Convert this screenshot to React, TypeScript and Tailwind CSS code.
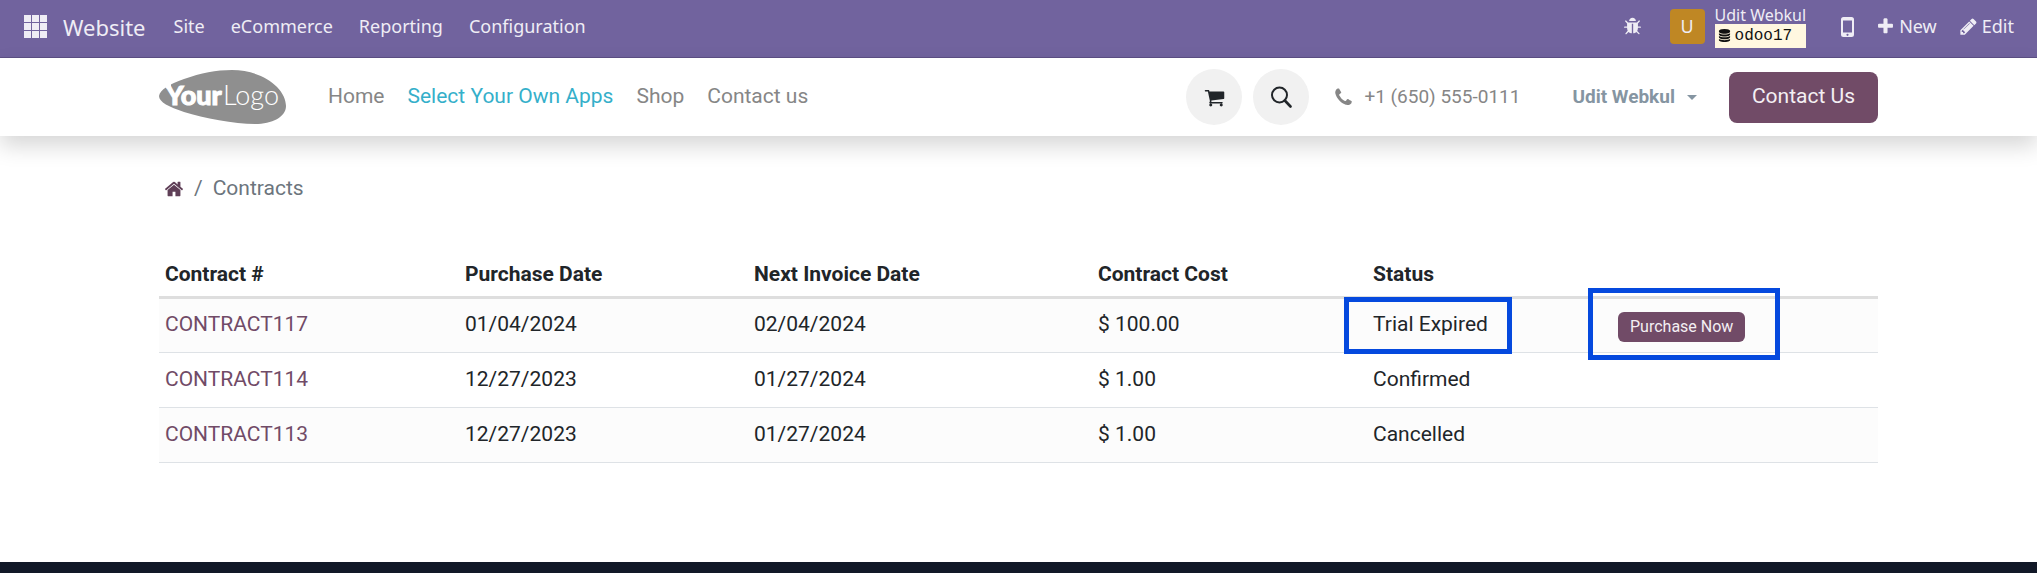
import React from "react";

const ICONS = {
  home: "M1472 992v480q0 26-19 45t-45 19h-384v-384h-256v384h-384q-26 0-45-19t-19-45v-480q0-1 .5-3t.5-3l575-474 575 474q1 2 1 6zm223-69l-62 74q-8 9-21 11h-3q-13 0-21-7l-692-577-692 577q-12 8-24 7-13-2-21-11l-62-74q-8-10-7-23.5t11-21.5l719-599q32-26 76-26t76 26l244 204v-195q0-14 9-23t23-9h192q14 0 23 9t9 23v408l219 182q10 8 11 21.5t-7 23.5z",
  cart: "M704 1536q0 52-38 90t-90 38-90-38-38-90 38-90 90-38 90 38 38 90zm896 0q0 52-38 90t-90 38-90-38-38-90 38-90 90-38 90 38 38 90zm128-1088v512q0 24-16.5 42.5t-40.5 21.5l-1044 122q13 60 13 70 0 16-24 64h920q26 0 45 19t19 45-19 45-45 19h-1024q-26 0-45-19t-19-45q0-11 8-31.5t16-36 21.5-40 15.5-29.5l-177-823h-204q-26 0-45-19t-19-45 19-45 45-19h256q16 0 28.5 6.5t19.5 15.5 13 24.5 8 26 5.5 29.5 4.5 26h1201q26 0 45 19t19 45z",
  phone: "M1600 1240q0 27-10 70.5t-21 68.5q-21 50-122 106-94 51-186 51-27 0-53-3.5t-57.5-12.5-47-14.5-55.5-20.5-49-18q-98-35-175-83-127-79-264-216t-216-264q-48-77-83-175-3-9-18-49t-20.5-55.5-14.5-47-12.5-57.5-3.5-53q0-92 51-186 56-101 106-122 25-11 68.5-21t70.5-10q14 0 21 3 18 6 53 76 11 19 30 54t35 63.5 31 53.5q3 4 17.5 25t21.5 35.5 7 28.5q0 20-28.5 50t-62 55-62 53-28.5 46q0 9 5 22.5t8.5 20.5 14 24 11.5 19q76 137 174 235t235 174q2 1 19 11.5t24 14 20.5 8.5 22.5 5q18 0 46-28.5t53-62 55-62 50-28.5q14 0 28.5 7t35.5 21.5 25 17.5q25 15 53.5 31t63.5 35 54 30q70 35 76 53 3 7 3 21z",
  pencil: "M491 1536l91-91-235-235-91 91v107h128v128h107zm523-928q0-22-22-22-10 0-17 7l-542 542q-7 7-7 17 0 22 22 22 10 0 17-7l542-542q7-7 7-17zm-54-192l416 416-832 832h-416v-416zm683 96q0 53-37 90l-166 166-416-416 166-165q36-38 90-38 53 0 91 38l235 234q37 39 37 91z",
  plus: "M1600 736v192q0 40-28 68t-68 28h-416v416q0 40-28 68t-68 28h-192q-40 0-68-28t-28-68v-416h-416q-40 0-68-28t-28-68v-192q0-40 28-68t68-28h416v-416q0-40 28-68t68-28h192q40 0 68 28t28 68v416h416q40 0 68 28t28 68z",
  database: "M896 768q237 0 443-43t325-127v170q0 69-103 128t-280 93.5-385 34.5-385-34.5-280-93.5-103-128v-170q119 84 325 127t443 43zm0 768q237 0 443-43t325-127v170q0 69-103 128t-280 93.5-385 34.5-385-34.5-280-93.5-103-128v-170q119 84 325 127t443 43zm0-384q237 0 443-43t325-127v170q0 69-103 128t-280 93.5-385 34.5-385-34.5-280-93.5-103-128v-170q119 84 325 127t443 43zm0-1152q208 0 385 34.5t280 93.5 103 128v128q0 69-103 128t-280 93.5-385 34.5-385-34.5-280-93.5-103-128v-128q0-69 103-128t280-93.5 385-34.5z",
  bug: "M1696 960q0 26-19 45t-45 19h-224q0 171-67 290l208 209q19 19 19 45t-19 45q-18 19-45 19t-45-19l-198-197q-5 5-15 13t-42 28.5-65 36.5-82 29-97 13v-896h-128v896q-51 0-101.5-13.5t-87-33-66-39-43.5-32.5l-15-14-183 207q-20 21-48 21-24 0-43-16-19-18-20.5-44.5t15.5-46.5l202-227q-58-114-58-274h-224q-26 0-45-19t-19-45 19-45 45-19h224v-294l-173-173q-19-19-19-45t19-45 45-19 45 19l173 173h844l173-173q19-19 45-19t45 19 19 45-19 45l-173 173v294h224q26 0 45 19t19 45zm-480-576h-640q0-133 93.5-226.5t226.5-93.5 226.5 93.5 93.5 226.5z",
};

function Icon({ name, className }: { name: keyof typeof ICONS; className: string }) {
  return (
    <svg viewBox="0 0 1792 1792" fill="currentColor" aria-hidden="true" className={className}>
      <path d={ICONS[name]} />
    </svg>
  );
}

function TopBar() {
  return (
    <header className="flex h-[58px] items-center justify-between border-b border-[#5d5085] bg-[#71639e] pr-[23px] pb-1 pl-6 font-['Noto_Sans',sans-serif] text-[18px] text-[#efedf5]">
      <nav className="flex items-center">
        <button aria-label="Home menu" className="mr-4">
          <svg viewBox="0 0 23 23" fill="currentColor" className="size-[23px]" aria-hidden="true">
            {[0, 8, 16].map((y) =>
              [0, 8, 16].map((x) => <rect key={`${x}-${y}`} x={x} y={y} width="7" height="7" />)
            )}
          </svg>
        </button>
        <a href="#website" className="mr-7 text-[22px] leading-8">Website</a>
        <div className="flex gap-[26px]">
          <a href="#site">Site</a>
          <a href="#ecommerce">eCommerce</a>
          <a href="#reporting">Reporting</a>
          <a href="#configuration">Configuration</a>
        </div>
      </nav>
      <div className="flex items-center">
        <button aria-label="Debug" className="mr-7">
          <Icon name="bug" className="size-[19px]" />
        </button>
        <button className="mr-[35px] flex items-center gap-[10px] text-left">
          <span className="flex size-[35px] items-center justify-center rounded-[4px] bg-[#bf8724] text-[18px]">U</span>
          <span className="flex flex-col">
            <span className="text-[16px] leading-[18px]">Udit Webkul</span>
            <span className="flex h-6 items-center gap-1 bg-[#fff7e0] px-[3px] font-['Liberation_Mono',monospace] text-[16px] text-[#111]">
              <Icon name="database" className="size-[13px]" />
              odoo17
            </span>
          </span>
        </button>
        <button aria-label="Mobile preview" className="mr-[22px]">
          <svg viewBox="0 0 13 20" className="h-5 w-[13px]" aria-hidden="true">
            <path
              fill="currentColor"
              fillRule="evenodd"
              d="M2.5 0H10.5A2.5 2.5 0 0 1 13 2.5V17.5A2.5 2.5 0 0 1 10.5 20H2.5A2.5 2.5 0 0 1 0 17.5V2.5A2.5 2.5 0 0 1 2.5 0ZM2 3.5V15.5H11V3.5ZM6.5 16.7A1.1 1.1 0 1 0 6.5 18.900A1.1 1.1 0 1 0 6.5 16.7Z"
            />
          </svg>
        </button>
        <button className="mr-[22px] flex items-center gap-1">
          <Icon name="plus" className="size-[19px]" />
          New
        </button>
        <button className="flex items-center gap-1">
          <Icon name="pencil" className="size-[19px]" />
          Edit
        </button>
      </div>
    </header>
  );
}

function Logo() {
  return (
    <svg viewBox="0 0 127 54" className="h-[54px] w-[127px]" role="img" aria-label="YourLogo">
      <path
        fill="#8f8f8f"
        d="M0 26C1 20 10 14 25 9C42 3 57 0 73 0C103 0 127 18 127 36C127 47 113 54 96 54C75 54 45 48 25 42C10 37 0 32 0 26Z"
      />
      <path fill="#fff" d="M4 14H12V19H8L6.500 17L5 17.500Z" />
      <g fill="#fff" fontSize="27">
        <text x="7" y="35" fontFamily="Lato, sans-serif" fontWeight="900" stroke="#fff" strokeWidth="1">Your</text>
        <text x="64" y="35" fontFamily="Lato, sans-serif" fontWeight="300">Logo</text>
      </g>
    </svg>
  );
}

function SiteHeader() {
  return (
    <div className="relative bg-white shadow-[0_10px_21px_rgba(0,0,0,0.16)]">
      <div className="mx-auto flex h-[78px] max-w-[1719px] items-center text-[21px] text-[#868686]">
        <a href="#logo" className="mr-[42px]"><Logo /></a>
        <nav className="flex gap-[23px]">
          <a href="#home">Home</a>
          <a href="#apps" className="text-[#35afca]">Select Your Own Apps</a>
          <a href="#shop">Shop</a>
          <a href="#contactus">Contact us</a>
        </nav>
        <div className="ml-auto flex items-center">
          <button aria-label="Cart" className="mr-[11px] flex size-14 items-center justify-center rounded-full bg-[#f1f1f1] text-[#212529]">
            <Icon name="cart" className="size-[21px]" />
          </button>
          <button aria-label="Search" className="mr-6 flex size-14 items-center justify-center rounded-full bg-[#f1f1f1] text-[#212529]">
            <svg viewBox="0 0 22 22" className="size-[22px]" fill="none" stroke="currentColor" aria-hidden="true">
              <circle cx="9.500" cy="9" r="7.500" strokeWidth="2" />
              <path d="M14.800 14.500L20.500 20.500" strokeWidth="2.600" strokeLinecap="round" />
            </svg>
          </button>
          <a href="tel:+16505550111" className="mr-[52px] flex items-center gap-[10px] text-[19px]">
            <Icon name="phone" className="size-[21px]" />
            +1 (650) 555-0111
          </a>
          <button className="mr-8 flex items-center gap-3 text-[19px] font-bold text-[#8595a2]">
            Udit Webkul
            <svg viewBox="0 0 10 5" className="h-[5px] w-[10px]" fill="currentColor" aria-hidden="true">
              <path d="M0 0H10L5 5Z" />
            </svg>
          </button>
          <a href="#contact" className="flex h-[51px] items-center rounded-[8px] bg-[#714b67] px-[23px] text-[#f4eff3]">Contact Us</a>
        </div>
      </div>
    </div>
  );
}

const ROWS = [
  { id: "CONTRACT117", bought: "01/04/2024", next: "02/04/2024", cost: "$ 100.00", status: "Trial Expired", trial: true },
  { id: "CONTRACT114", bought: "12/27/2023", next: "01/27/2024", cost: "$ 1.00", status: "Confirmed", trial: false },
  { id: "CONTRACT113", bought: "12/27/2023", next: "01/27/2024", cost: "$ 1.00", status: "Cancelled", trial: false },
];

function Contracts() {
  return (
    <table className="mt-11 w-full border-collapse text-left text-[21px] leading-8 text-[#212529]">
      <colgroup>
        <col className="w-[300px]" />
        <col className="w-[289px]" />
        <col className="w-[344px]" />
        <col className="w-[275px]" />
        <col className="w-[245px]" />
        <col />
      </colgroup>
      <thead>
        <tr className="h-[48px] border-b-3 border-[#dedede]">
          <th className="px-[6px] pt-1">Contract #</th>
          <th className="px-[6px] pt-1">Purchase Date</th>
          <th className="px-[6px] pt-1">Next Invoice Date</th>
          <th className="px-[6px] pt-1">Contract Cost</th>
          <th className="px-[6px] pt-1">Status</th>
          <td />
        </tr>
      </thead>
      <tbody>
        {ROWS.map((r) => (
          <tr key={r.id} className="h-[55px] border-b border-[#dee2e6] odd:bg-[#fcfcfc]">
            <td className="px-[6px] pb-[2px]"><a href="#contract" className="text-[#714b67]">{r.id}</a></td>
            <td className="px-[6px] pb-[2px]">{r.bought}</td>
            <td className="px-[6px] pb-[2px]">{r.next}</td>
            <td className="px-[6px] pb-[2px]">{r.cost}</td>
            <td className="relative px-[6px] pb-[2px]">
              {r.status}
              {r.trial && <span className="pointer-events-none absolute -top-[2px] -left-[23px] h-[57px] w-[168px] border-5 border-[#0549de]" />}
            </td>
            <td className="relative px-[6px]">
              {r.trial && (
                <>
                  <button className="mt-1 flex h-[30px] items-center rounded-[6px] bg-[#714b67] px-3 text-[16px] text-[#f4eff3]">Purchase Now</button>
                  <span className="pointer-events-none absolute -top-[11px] -left-[24px] h-[72px] w-[192px] border-5 border-[#0549de]" />
                </>
              )}
            </td>
          </tr>
        ))}
      </tbody>
    </table>
  );
}

export default function App() {
  return (
    <div className="flex min-h-screen flex-col bg-white font-['Roboto',sans-serif]">
      <TopBar />
      <SiteHeader />
      <main className="mx-auto w-full max-w-[1719px] flex-1 pb-24">
        <nav aria-label="Breadcrumb" className="mt-[37px] flex h-8 items-center px-[5px] text-[21px] text-[#6c757d]">
          <a href="#portal" aria-label="Home" className="text-[#5f3f57]"><Icon name="home" className="size-5" /></a>
          <span className="mx-[10px]">/</span>
          <span>Contracts</span>
        </nav>
        <Contracts />
      </main>
      <footer className="h-[11px] bg-[#111827]" />
    </div>
  );
}
